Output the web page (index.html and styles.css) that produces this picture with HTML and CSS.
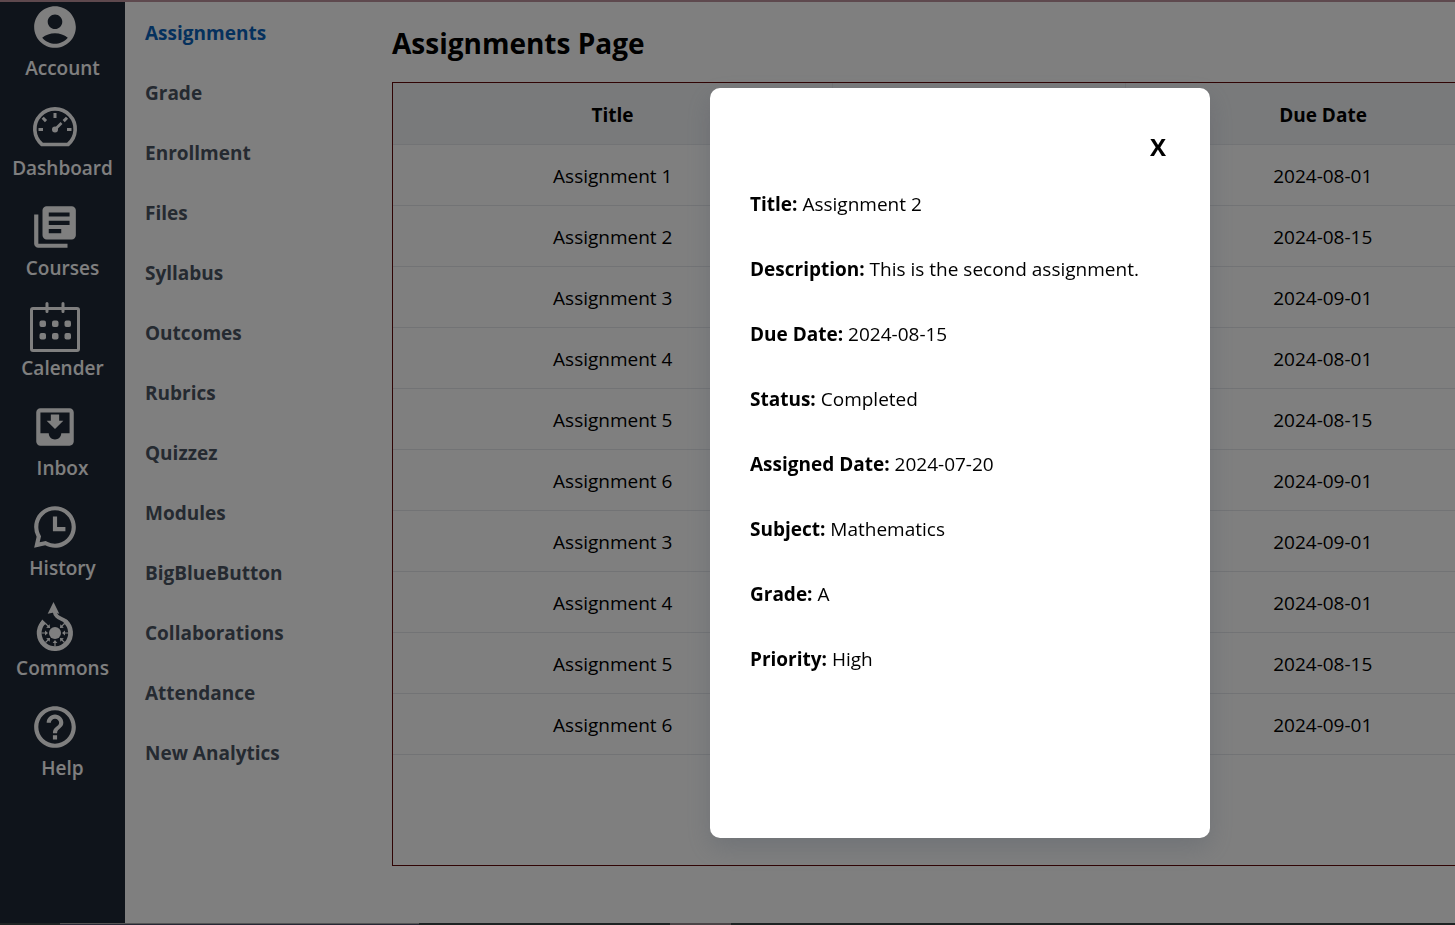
FILE: index.html
```
<!DOCTYPE html>
<html lang="en">
<head>
  <meta charset="UTF-8">
  <title>Assignments</title>
  <meta name="viewport" content="width=device-width,initial-scale=1">
  <link rel="stylesheet" href="styles.css">
</head>
<body>
<div class="page">
  <nav class="rail">
    <a href="#" class="rail-item">
      <svg class="icon" viewBox="0 0 24 24"><path d="M12 2C6.48 2 2 6.48 2 12s4.48 10 10 10 10-4.48 10-10S17.52 2 12 2zm0 4c1.93 0 3.5 1.57 3.5 3.5S13.93 13 12 13s-3.5-1.57-3.5-3.5S10.07 6 12 6zm0 14c-2.03 0-4.43-.82-6.14-2.88C7.55 15.8 9.68 15 12 15s4.45.8 6.14 2.12C16.43 19.18 14.03 20 12 20z"/></svg>
      <span>Account</span>
    </a>
    <a href="#" class="rail-item">
      <svg class="icon" viewBox="0 0 50 50"><path class="line" stroke-width="3.6" d="M12 42.500A20.200 20.200 0 1 1 38 42.500z"/><path class="line" stroke-width="3" d="M8.500 27.500h4.500M37 27.500h4.500M25 11v5M12.700 15.800l3.300 3.300M37 15.800l-3.300 3.300"/><path class="line" stroke-width="2.6" d="M25 27.500l6.500-6.500"/><circle cx="25" cy="27.5" r="3"/></svg>
      <span>Dashboard</span>
    </a>
    <a href="#" class="rail-item">
      <svg class="icon" viewBox="0 0 24 24"><path d="M20 2H8a2 2 0 0 0-2 2v12a2 2 0 0 0 2 2h12a2 2 0 0 0 2-2V4a2 2 0 0 0-2-2zM15 15H9v-2h6v2zM19 11H9V9h10v2zM19 7H9V5h10v2zM4 6H2v14a2 2 0 0 0 2 2h14v-2H4V6z"/></svg>
      <span>Courses</span>
    </a>
    <a href="#" class="rail-item">
      <svg class="icon" viewBox="0 0 50 50"><rect class="line" stroke-width="3" x="1.5" y="6.5" width="47" height="42" rx="1.5"/><path class="line" stroke-width="3" stroke-linecap="round" d="M17 1.500v8M33 1.500v8"/><rect x="9.5" y="18.5" width="6.5" height="6.5" rx="2"/><rect x="22" y="18.5" width="6.5" height="6.5" rx="2"/><rect x="34.5" y="18.5" width="6.5" height="6.5" rx="2"/><rect x="9.5" y="31" width="6.5" height="6.5" rx="2"/><rect x="22" y="31" width="6.5" height="6.5" rx="2"/><rect x="34.5" y="31" width="6.5" height="6.5" rx="2"/></svg>
      <span>Calender</span>
    </a>
    <a href="#" class="rail-item">
      <svg class="icon" viewBox="0 0 24 24"><path d="M16 9h-2V6h-4v3H8l4 4 4-4zm3-6H5c-1.1 0-2 .9-2 2v14a2 2 0 0 0 2 2h14c1.1 0 2-.9 2-2V5c0-1.1-.9-2-2-2zm0 12h-4c0 1.66-1.35 3-3 3s-3-1.34-3-3H5V5h14v10z"/></svg>
      <span>Inbox</span>
    </a>
    <a href="#" class="rail-item">
      <svg class="icon" viewBox="0 0 24 24"><path d="M12 2c5.520 0 10 4.480 10 10s-4.480 10-10 10c-1.700 0-3.300-.43-4.710-1.180L2 22l1.180-5.290A9.950 9.950 0 0 1 2 12C2 6.480 6.480 2 12 2zm0 2c-4.420 0-8 3.580-8 8 0 1.330.33 2.620.94 3.770l.35.65-.66 2.950 2.950-.66.65.35C9.380 19.670 10.670 20 12 20c4.420 0 8-3.580 8-8s-3.580-8-8-8zm1 3v5h4v2h-6V7h2z"/></svg>
      <span>History</span>
    </a>
    <a href="#" class="rail-item">
      <svg class="icon" viewBox="0 0 50 50">
        <path d="M23.500 0l5.800 11.800-5.500-1.300-6.100 1.300z"/>
        <path class="line" stroke-width="4.8" d="M13.200 20.500A15.700 15.700 0 1 0 35 19"/>
        <path class="line" stroke-width="3.800" d="M36.500 20C32 15.500 25.500 17 24.500 9"/>
        <path d="M12.200 17.600l4.200 4-3.500 2-3-2z"/>
        <circle cx="25" cy="31" r="6"/>
        <path id="spoke" d="M11.500 30.400h3.500v-1.800l3 2.400-3 2.400v-1.800h-3.500z"/>
        <use href="#spoke" transform="rotate(45 25 31)"/>
        <use href="#spoke" transform="rotate(135 25 31)"/>
        <use href="#spoke" transform="rotate(180 25 31)"/>
        <use href="#spoke" transform="rotate(225 25 31)"/>
        <use href="#spoke" transform="rotate(270 25 31)"/>
        <use href="#spoke" transform="rotate(315 25 31)"/>
      </svg>
      <span>Commons</span>
    </a>
    <a href="#" class="rail-item">
      <svg class="icon" viewBox="0 0 24 24"><path d="M11 18h2v-2h-2v2zm1-16C6.480 2 2 6.480 2 12s4.480 10 10 10 10-4.480 10-10S17.520 2 12 2zm0 18c-4.410 0-8-3.590-8-8s3.590-8 8-8 8 3.590 8 8-3.590 8-8 8zm0-14c-2.210 0-4 1.790-4 4h2c0-1.100.9-2 2-2s2 .9 2 2c0 2-3 1.750-3 5h2c0-2.250 3-2.500 3-5 0-2.210-1.790-4-4-4z"/></svg>
      <span>Help</span>
    </a>
  </nav>

  <nav class="menu">
    <a href="#" class="active">Assignments</a>
    <a href="#">Grade</a>
    <a href="#">Enrollment</a>
    <a href="#">Files</a>
    <a href="#">Syllabus</a>
    <a href="#">Outcomes</a>
    <a href="#">Rubrics</a>
    <a href="#">Quizzez</a>
    <a href="#">Modules</a>
    <a href="#">BigBlueButton</a>
    <a href="#">Collaborations</a>
    <a href="#">Attendance</a>
    <a href="#">New Analytics</a>
  </nav>

  <main class="content">
    <h1>Assignments Page</h1>
    <div class="table-box">
      <table>
        <thead>
          <tr><th class="col-title">Title</th><th class="col-mid"></th><th class="col-date">Due Date</th></tr>
        </thead>
        <tbody>
          <tr><td>Assignment 1</td><td></td><td>2024-08-01</td></tr>
          <tr><td>Assignment 2</td><td></td><td>2024-08-15</td></tr>
          <tr><td>Assignment 3</td><td></td><td>2024-09-01</td></tr>
          <tr><td>Assignment 4</td><td></td><td>2024-08-01</td></tr>
          <tr><td>Assignment 5</td><td></td><td>2024-08-15</td></tr>
          <tr><td>Assignment 6</td><td></td><td>2024-09-01</td></tr>
          <tr><td>Assignment 3</td><td></td><td>2024-09-01</td></tr>
          <tr><td>Assignment 4</td><td></td><td>2024-08-01</td></tr>
          <tr><td>Assignment 5</td><td></td><td>2024-08-15</td></tr>
          <tr><td>Assignment 6</td><td></td><td>2024-09-01</td></tr>
        </tbody>
      </table>
    </div>
  </main>
</div>
<div class="strip"><span class="strip-search"></span><span class="strip-app"></span></div>

<div class="overlay">
  <div class="modal" role="dialog" aria-modal="true">
    <button type="button" class="close">X</button>
    <p><strong>Title:</strong> Assignment 2</p>
    <p><strong>Description:</strong> This is the second assignment.</p>
    <p><strong>Due Date:</strong> 2024-08-15</p>
    <p><strong>Status:</strong> Completed</p>
    <p><strong>Assigned Date:</strong> 2024-07-20</p>
    <p><strong>Subject:</strong> Mathematics</p>
    <p><strong>Grade:</strong> A</p>
    <p><strong>Priority:</strong> High</p>
  </div>
</div>
</body>
</html>
```
FILE: styles.css
```
*{box-sizing:border-box}
body{margin:0;font-family:"Open Sans","Noto Sans",sans-serif;font-size:19px;line-height:30px;color:#000;background:#fff;overflow:hidden}
a{text-decoration:none}
.page{display:flex;min-height:calc(100vh - 2px);border-top:2px solid #bc929c}

/* left icon bar */
.rail{flex:none;width:125px;background:#1f2937}
.rail-item{display:block;height:100px;line-height:32px;color:#fff;font-weight:600;text-align:center}
.icon{display:block;width:50px;height:50px;margin-left:30px;fill:#fff}
.icon .line{fill:none;stroke:#fff}

/* course menu */
.menu{flex:none;width:267px;padding:1px 0 0 20px}
.menu a{display:block;line-height:60px;font-weight:700;color:#4b5563}
.menu a.active{color:#0b62bb}

.content{flex:1;min-width:0}
h1{margin:0;padding:21px 0 19px;font-size:28px;line-height:40px;font-weight:700}
.table-box{width:calc(100% + 66px);min-height:784px;border:1px solid #600808}
table{width:100%;border-collapse:collapse;table-layout:fixed;text-align:center}
th,td{height:61px;padding:3px 0 0;border-bottom:1px solid #e5e7eb}
th{background:#f3f4f6;font-weight:700}
th + th{border-left:1px solid #e5e7eb}
.col-title{width:39%}
.col-mid{width:26%}
.col-date{width:35%}

/* bar along the bottom edge */
.strip{display:flex;gap:251px;height:2px;padding-left:60px;background:#3c4646}
.strip-search{width:359px;border-top:1px solid #aaa;background:#50506a}
.strip-app{width:61px;background:#968a8e}

/* dialog */
.overlay{position:fixed;inset:0;display:flex;align-items:center;justify-content:center;padding-left:465px;background:rgba(0,0,0,.5)}
.modal{display:flex;flex-direction:column;width:500px;min-height:750px;padding:40px;border-radius:10px;background:#fff;box-shadow:0 10px 25px rgba(75,85,99,.3)}
.modal p{margin:0 0 35px}
.close{align-self:flex-end;margin-bottom:24px;padding:0 4px;border:0;background:none;font:700 24px/37px "Open Sans","Noto Sans",sans-serif;color:#000;cursor:pointer}
```
